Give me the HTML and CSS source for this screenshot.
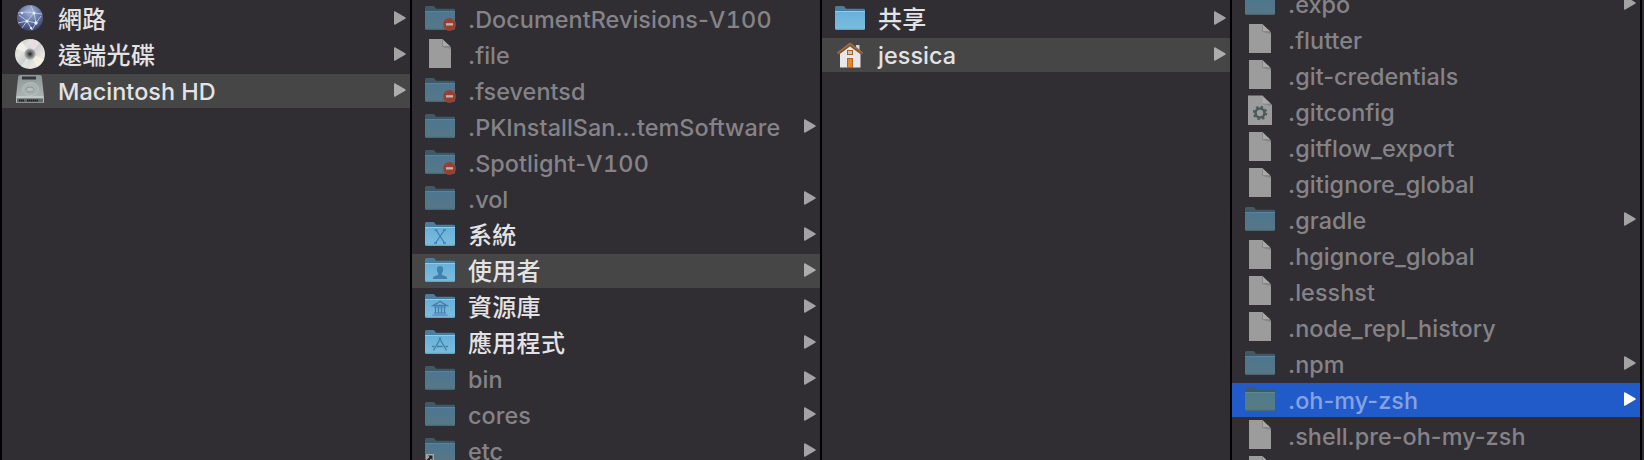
FILE: index.html
```
<!DOCTYPE html>
<html lang="zh-Hant">
<head>
    <meta charset="UTF-8">
    <meta name="viewport" content="width=device-width, initial-scale=1.0">
    <title>Macintosh HD</title>
    <link rel="stylesheet" href="styles.css">
</head>
<body>
    <!-- shared icons -->
    <svg class="defs" width="0" height="0">
        <defs>
            <linearGradient id="folderFill" x1="0" y1="0" x2="0" y2="1">
                <stop offset="0" stop-color="#66b1dc"/>
                <stop offset="0.9" stop-color="#7dbbdb"/>
                <stop offset="1" stop-color="#5f9dbd"/>
            </linearGradient>
            <linearGradient id="folderDimFill" x1="0" y1="0" x2="0" y2="1">
                <stop offset="0" stop-color="#4c7692"/>
                <stop offset="0.9" stop-color="#577786"/>
                <stop offset="1" stop-color="#46626f"/>
            </linearGradient>
            <linearGradient id="folderSelFill" x1="0" y1="0" x2="0" y2="1">
                <stop offset="0" stop-color="#4f7b8d"/>
                <stop offset="0.9" stop-color="#587b83"/>
                <stop offset="1" stop-color="#44636f"/>
            </linearGradient>
            <radialGradient id="globeFill" cx="0.5" cy="0.25" r="0.8">
                <stop offset="0" stop-color="#a5b3d6"/>
                <stop offset="0.5" stop-color="#6577a6"/>
                <stop offset="1" stop-color="#303858"/>
            </radialGradient>
            <linearGradient id="discFill" x1="0" y1="0" x2="1" y2="1">
                <stop offset="0" stop-color="#b9b9b9"/>
                <stop offset="0.3" stop-color="#e4e4e2"/>
                <stop offset="0.5" stop-color="#cfcfd0"/>
                <stop offset="0.75" stop-color="#e9e8e4"/>
                <stop offset="1" stop-color="#bdbdbd"/>
            </linearGradient>
            <linearGradient id="driveFill" x1="0" y1="0" x2="0" y2="1">
                <stop offset="0" stop-color="#8d9595"/>
                <stop offset="1" stop-color="#b4bcbc"/>
            </linearGradient>
            <symbol id="folder" viewBox="0 0 32 32">
                <path d="M1 9V4.500Q1 3 2.500 3H9q1 0 1.600.8L12 5.700H29.500Q31 5.700 31 7V10H1z" fill="#497f9e"/>
                <path d="M1 8.500H31V25.500Q31 27 29.500 27H2.500Q1 27 1 25.500z" fill="url(#folderFill)"/>
                <path d="M1 8.500H31" stroke="#8cc9ea"/>
            </symbol>
            <symbol id="folder-dim" viewBox="0 0 32 32">
                <path d="M1 9V4.500Q1 3 2.500 3H9q1 0 1.600.8L12 5.700H29.500Q31 5.700 31 7V10H1z" fill="#3e5968"/>
                <path d="M1 8.500H31V25.500Q31 27 29.500 27H2.500Q1 27 1 25.500z" fill="url(#folderDimFill)"/>
                <path d="M1 8.500H31" stroke="#5b8297"/>
            </symbol>
            <symbol id="folder-selected" viewBox="0 0 32 32">
                <path d="M1 9V4.500Q1 3 2.500 3H9q1 0 1.600.8L12 5.700H29.500Q31 5.700 31 7V10H1z" fill="#3e5a65"/>
                <path d="M1 8.500H31V25.500Q31 27 29.500 27H2.500Q1 27 1 25.500z" fill="url(#folderSelFill)"/>
                <path d="M1 8.500H31" stroke="#5f8894"/>
            </symbol>
            <symbol id="locked" viewBox="0 0 32 32">
                <use href="#folder-dim"/>
                <circle cx="25.500" cy="21.500" r="6.500" fill="#974132"/>
                <rect x="22" y="20.200" width="7" height="2.300" fill="#c3b3b0"/>
            </symbol>
            <symbol id="file" viewBox="0 0 32 32">
                <path d="M5 0H18.500L27 9V29H5z" fill="#9c9c9c"/>
                <path d="M18.500 0V7.500H26L27 9V10L18.500 8z" fill="#858585"/>
                <path d="M18.500 0.500L26.500 7.500H18.500z" fill="#a9a9a9"/>
                <path d="M18.500 0V7.500H25.500" fill="none" stroke="#818181" stroke-width="0.800"/>
            </symbol>
            <symbol id="arrow" viewBox="0 0 12 14">
                <path d="M0 1.200Q0 -.300 1.400.5L11.200 6.200Q12.300 7 11.200 7.800L1.400 13.500Q0 14.300 0 12.800z" fill="currentColor"/>
            </symbol>
        </defs>
    </svg>

    <div class="browser">
        <div class="column">
            <div class="row">
                <svg class="icon" viewBox="0 0 32 32">
                    <circle cx="16" cy="15" r="13" fill="url(#globeFill)"/>
                    <path d="M4 10Q12 8 20 10L28 11M20 10L17 3M20 10L13 18L5 12M13 18L8 25M13 18L22 20L27 13M22 20L20 10M22 20L18 27M13 18L18 27M4 20L13 18" fill="none" stroke="#c3cee6" stroke-width="0.900"/>
                    <circle cx="20" cy="10" r="1.500" fill="#e6edff"/>
                    <circle cx="13" cy="18" r="1.500" fill="#e6edff"/>
                    <circle cx="22" cy="20" r="1.700" fill="#e6edff"/>
                    <circle cx="8" cy="10" r="1.200" fill="#dde5f8"/>
                    <circle cx="17" cy="25" r="1.200" fill="#dde5f8"/>
                </svg>
                <span class="name zh">網路</span>
                <svg class="arrow"><use href="#arrow"/></svg>
            </div>
            <div class="row">
                <svg class="icon" viewBox="0 0 32 32">
                    <circle cx="16" cy="15" r="15" fill="url(#discFill)"/>
                    <path d="M16 15L2 10A15 15 0 0 1 8 2.500z" fill="#f0efec"/>
                    <path d="M16 15L30 20A15 15 0 0 1 23 28z" fill="#f3f0df"/>
                    <path d="M16 15L18 .3A15 15 0 0 1 26 4z" fill="#e9dfe2"/>
                    <path d="M16 15L13 29.500A15 15 0 0 1 7 27z" fill="#dce4df"/>
                    <circle cx="16" cy="15" r="5.500" fill="#a2a2a2"/>
                    <circle cx="16" cy="15" r="3.400" fill="#666" stroke="#808080"/>
                    <circle cx="16" cy="15" r="1.600" fill="#303033"/>
                </svg>
                <span class="name zh">遠端光碟</span>
                <svg class="arrow"><use href="#arrow"/></svg>
            </div>
            <div class="row active">
                <svg class="icon" viewBox="0 0 32 32">
                    <path d="M6 0H26Q27.500 0 27.800 1.500L30 22V27Q30 28 29 28H3Q2 28 2 27V22L4.200 1.500Q4.500 0 6 0z" fill="url(#driveFill)"/>
                    <path d="M2.500 22H29.500" stroke="#d3dada"/>
                    <rect x="3" y="23.500" width="26" height="4" fill="#626666"/>
                    <path d="M5 25.500H10M13 25.500H24" stroke="#1e2020" stroke-width="2" stroke-dasharray="1.500 .5"/>
                    <rect x="8" y="1.500" width="14" height="3" fill="#34383a"/>
                    <ellipse cx="16.500" cy="14" rx="8" ry="6.500" fill="#a9b1b1" stroke="#c2caca" stroke-width="0.600"/>
                    <path d="M12 15Q12 12 16 12T20 15Q20 17 16 17T12 15z" fill="#b6bebe" stroke="#858d8d" stroke-width="0.800"/>
                </svg>
                <span class="name">Macintosh HD</span>
                <svg class="arrow"><use href="#arrow"/></svg>
            </div>
        </div>

        <div class="column">
            <div class="row dim">
                <svg class="icon"><use href="#locked"/></svg>
                <span class="name">.DocumentRevisions-<span class="version">V100</span></span>
            </div>
            <div class="row dim">
                <svg class="icon"><use href="#file"/></svg>
                <span class="name">.file</span>
            </div>
            <div class="row dim">
                <svg class="icon"><use href="#locked"/></svg>
                <span class="name">.fseventsd</span>
            </div>
            <div class="row dim">
                <svg class="icon"><use href="#folder-dim"/></svg>
                <span class="name">.PKInstallSan...temSoftware</span>
                <svg class="arrow"><use href="#arrow"/></svg>
            </div>
            <div class="row dim">
                <svg class="icon"><use href="#locked"/></svg>
                <span class="name">.Spotlight-<span class="version">V100</span></span>
            </div>
            <div class="row dim">
                <svg class="icon"><use href="#folder-dim"/></svg>
                <span class="name">.vol</span>
                <svg class="arrow"><use href="#arrow"/></svg>
            </div>
            <div class="row">
                <svg class="icon" viewBox="0 0 32 32">
                    <use href="#folder"/>
                    <path d="M12 11L20.500 24M20.500 11L11.500 24M10.500 11H13.500M19 11H22M10 24H13M19 24H22" stroke="#4080ad" stroke-width="1.300"/>
                </svg>
                <span class="name zh">系統</span>
                <svg class="arrow"><use href="#arrow"/></svg>
            </div>
            <div class="row active">
                <svg class="icon" viewBox="0 0 32 32">
                    <use href="#folder"/>
                    <path d="M16 11Q19.300 11 19.200 14.500Q19 17 17.800 18V19.500Q18.500 20.300 21 21Q23.200 21.700 23.300 24H8.700Q8.800 21.700 11 21Q13.500 20.300 14.200 19.500V18Q13 17 12.800 14.500Q12.700 11 16 11z" fill="#4281aa"/>
                </svg>
                <span class="name zh">使用者</span>
                <svg class="arrow"><use href="#arrow"/></svg>
            </div>
            <div class="row">
                <svg class="icon" viewBox="0 0 32 32">
                    <use href="#folder"/>
                    <path d="M9 14.500L16 10.500L23 14.500z" fill="none" stroke="#3f7faa" stroke-width="1.300"/>
                    <path d="M11.500 16V22M14.500 16V22M17.500 16V22M20.500 16V22M10 16H22M10 22H22M8.500 24H23.500" stroke="#3f7faa" stroke-width="1.200"/>
                </svg>
                <span class="name zh">資源庫</span>
                <svg class="arrow"><use href="#arrow"/></svg>
            </div>
            <div class="row">
                <svg class="icon" viewBox="0 0 32 32">
                    <use href="#folder"/>
                    <path d="M15 10.500L22.500 23.500M17 10.500L9.500 23.500M8 19.500H10.500M13 19.500H18.500M21.500 19.500H24" stroke="#3f7faa" stroke-width="1.300"/>
                </svg>
                <span class="name zh">應用程式</span>
                <svg class="arrow"><use href="#arrow"/></svg>
            </div>
            <div class="row dim">
                <svg class="icon"><use href="#folder-dim"/></svg>
                <span class="name">bin</span>
                <svg class="arrow"><use href="#arrow"/></svg>
            </div>
            <div class="row dim">
                <svg class="icon"><use href="#folder-dim"/></svg>
                <span class="name">cores</span>
                <svg class="arrow"><use href="#arrow"/></svg>
            </div>
            <div class="row dim">
                <svg class="icon" viewBox="0 0 32 32">
                    <use href="#folder-dim"/>
                    <!-- alias badge -->
                    <rect x="2" y="19" width="8" height="9" fill="#a5a5a5"/>
                    <path d="M4 20.500H8.500V25L7 23.500L4.500 26.500V28H2V25.500L5.500 22z" fill="#222"/>
                </svg>
                <span class="name">etc</span>
                <svg class="arrow"><use href="#arrow"/></svg>
            </div>
        </div>

        <div class="column">
            <div class="row">
                <svg class="icon"><use href="#folder"/></svg>
                <span class="name zh">共享</span>
                <svg class="arrow"><use href="#arrow"/></svg>
            </div>
            <div class="row active">
                <svg class="icon" viewBox="0 0 32 32">
                    <rect x="22" y="6" width="3.500" height="7" fill="#d5d5d5"/>
                    <path d="M6 14L16 6L26.500 14V28.500H6z" fill="#e8e8ea"/>
                    <path d="M16 3.500L29 13.500L27.500 16L16 7.500L4.500 16L3 13.500z" fill="#7d5a38"/>
                    <path d="M16 3.500L29 13.500L28.400 14.500L16 5.500L3.600 14.500L3 13.500z" fill="#9a6f45"/>
                    <rect x="13.500" y="11.500" width="5" height="4" fill="#bac8dc" stroke="#a5612b"/>
                    <rect x="13.500" y="19.500" width="5" height="9" fill="#e08a2e" stroke="#b36520"/>
                </svg>
                <span class="name">jessica</span>
                <svg class="arrow"><use href="#arrow"/></svg>
            </div>
        </div>

        <div class="column scrolled">
            <div class="row dim">
                <svg class="icon"><use href="#folder-dim"/></svg>
                <span class="name">.expo</span>
                <svg class="arrow"><use href="#arrow"/></svg>
            </div>
            <div class="row dim">
                <svg class="icon"><use href="#file"/></svg>
                <span class="name">.flutter</span>
            </div>
            <div class="row dim">
                <svg class="icon"><use href="#file"/></svg>
                <span class="name">.git-credentials</span>
            </div>
            <div class="row dim">
                <svg class="icon" viewBox="0 0 32 32">
                    <path d="M4 -.5H18.500L28 9V29H4z" fill="#9c9c9c"/>
                    <path d="M18.500 0V7.500H26L27 9V10L18.500 8z" fill="#858585"/>
                    <path d="M18.500 0.500L26.500 7.500H18.500z" fill="#a9a9a9"/>
                    <circle cx="16" cy="17" r="4.500" fill="none" stroke="#4d5a5c" stroke-width="2.600"/>
                    <circle cx="16" cy="17" r="6.200" fill="none" stroke="#4d5a5c" stroke-width="2" stroke-dasharray="2.430"/>
                </svg>
                <span class="name">.gitconfig</span>
            </div>
            <div class="row dim">
                <svg class="icon"><use href="#file"/></svg>
                <span class="name">.gitflow_export</span>
            </div>
            <div class="row dim">
                <svg class="icon"><use href="#file"/></svg>
                <span class="name">.gitignore_global</span>
            </div>
            <div class="row dim">
                <svg class="icon"><use href="#folder-dim"/></svg>
                <span class="name">.gradle</span>
                <svg class="arrow"><use href="#arrow"/></svg>
            </div>
            <div class="row dim">
                <svg class="icon"><use href="#file"/></svg>
                <span class="name">.hgignore_global</span>
            </div>
            <div class="row dim">
                <svg class="icon"><use href="#file"/></svg>
                <span class="name">.lesshst</span>
            </div>
            <div class="row dim">
                <svg class="icon"><use href="#file"/></svg>
                <span class="name">.node_repl_history</span>
            </div>
            <div class="row dim">
                <svg class="icon"><use href="#folder-dim"/></svg>
                <span class="name">.npm</span>
                <svg class="arrow"><use href="#arrow"/></svg>
            </div>
            <div class="row dim selected">
                <svg class="icon"><use href="#folder-selected"/></svg>
                <span class="name">.oh-my-zsh</span>
                <svg class="arrow"><use href="#arrow"/></svg>
            </div>
            <div class="row dim">
                <svg class="icon"><use href="#file"/></svg>
                <span class="name">.shell.pre-oh-my-zsh</span>
            </div>
            <div class="row dim">
                <svg class="icon"><use href="#file"/></svg>
            </div>
        </div>
    </div>
</body>
</html>
```
FILE: styles.css
```
body {
    margin: 0;
    background-color: #302e33;
    font-family: Inter, "Noto Sans CJK TC", sans-serif;
    font-size: 23.4px;
    font-weight: 500;
    color: #e3e2e4;
    overflow: hidden;
}
.defs {
    display: block;
}
.browser {
    display: flex;
    height: 460px;
    overflow: hidden;
    border-left: 2px solid #000;
}
.column {
    flex: none;
    display: flex;
    flex-direction: column;
    gap: 2px;
    width: 408px;
    padding-top: 2px;
    border-right: 2px solid #000;
}
.column.scrolled {
    margin-top: -15px;
}
.row {
    flex: none;
    display: flex;
    align-items: flex-start;
    height: 34px;
    padding: 0 4px 0 12px;
    box-sizing: border-box;
}
.row.active {
    background-color: #464646;
}
.icon {
    flex: none;
    width: 32px;
    height: 32px;
    margin: 1px 12px 0 0;
    overflow: visible;
}
.name {
    line-height: 36px;
    letter-spacing: 0.05px;
    white-space: nowrap;
}
.name.zh {
    font-family: "Noto Sans CJK TC", sans-serif;
    font-size: 24px;
    line-height: 32px;
    letter-spacing: 0.3px;
}
.version {
    font-variant-numeric: tabular-nums;
    letter-spacing: 0.3px;
}
.arrow {
    flex: none;
    width: 12px;
    height: 14px;
    margin: 9px 0 0 auto;
    color: #a3a2a5;
}
.dim .name {
    color: #858387;
}
.active .arrow {
    color: #adadad;
}
.row.selected {
    background-color: #215ac9;
}
.selected .name {
    color: #85a3e1;
}
.selected .arrow {
    color: #fff;
}
```
